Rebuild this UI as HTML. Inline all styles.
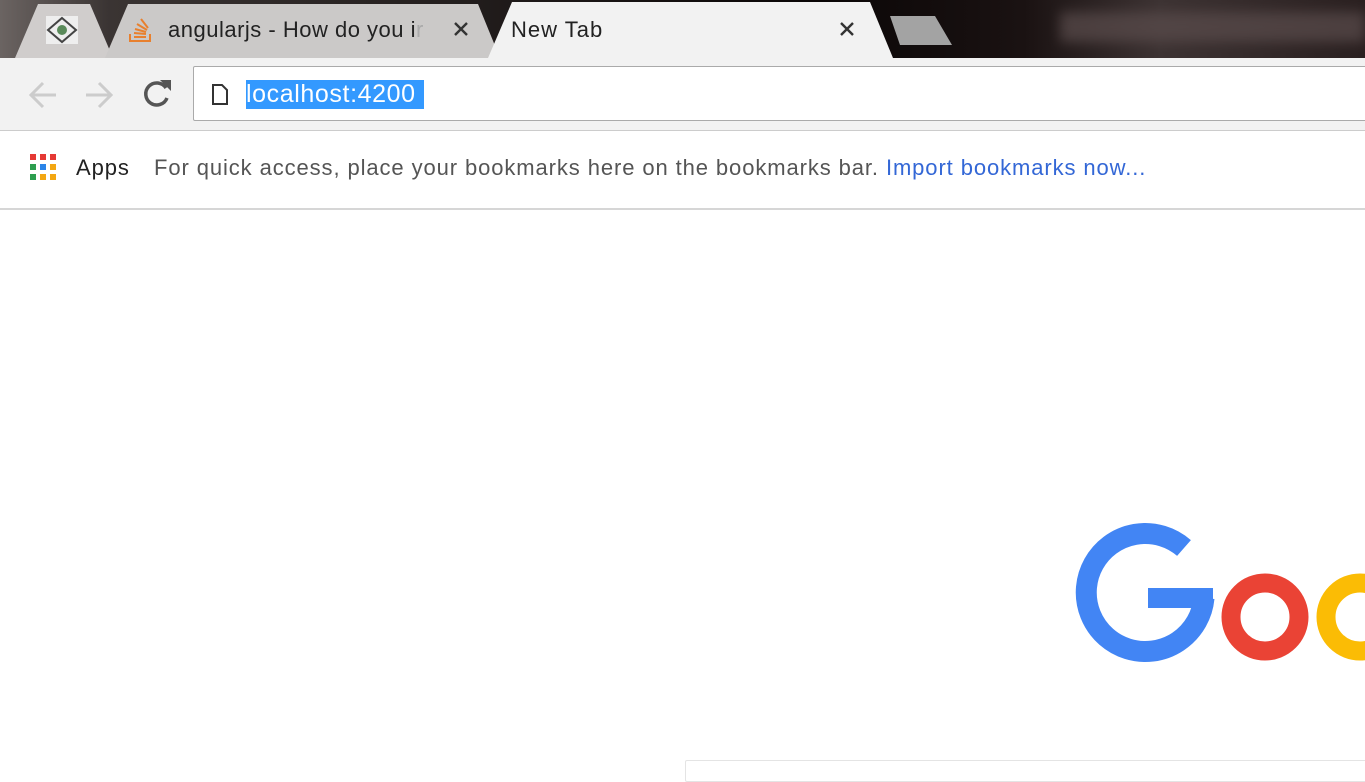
<!DOCTYPE html>
<html><head><style>
body{margin:0;width:1365px;height:768px;overflow:hidden;background:#fff;font-family:"Liberation Sans",sans-serif;position:relative}
.a{position:absolute}
</style></head><body>
<div class="a" style="left:0;top:0;width:1365px;height:58px;background:linear-gradient(90deg,#6b6462 0%,#3a3433 8%,#0a0606 60%,#1a1212 75%,#3d3333 85%,#2a2020 100%)"></div>
<div class="a" style="left:1060px;top:12px;width:305px;height:30px;background:#5a4c4c;filter:blur(6px);opacity:.7"></div>
<svg class="a" style="left:0;top:0" width="960" height="60">
<polygon points="15,58 38,4 90,4 113,58" fill="#d0cdcc"/>
<polygon points="105,58 128,4 478,4 500,58" fill="#cbc9c8"/>
<polygon points="488,58 512,2 870,2 893,58" fill="#f2f2f2"/>
<polygon points="890,16 935,16 952,45 900,45" fill="#a3a3a3"/>
<rect x="46" y="16" width="32" height="28" fill="#eee"/>
<polygon points="62,18 76,30 62,42 48,30" fill="none" stroke="#444" stroke-width="2"/>
<circle cx="62" cy="30" r="5" fill="#5a8a5a"/>
<g stroke="#e8802e" stroke-width="2" fill="none"><path d="M130 34v7h20v-7"/><path d="M134 37h12M134 33l12 1M135 29l11 3M137 24l10 6M141 19l7 9"/></g>
<g stroke="#333" stroke-width="2.4"><path d="M455 23l12 12M467 23l-12 12M841 23l12 12M853 23l-12 12"/></g>
<text x="168" y="37" font-size="22" letter-spacing="0.5" fill="#222" font-family="Liberation Sans">angularjs - How do you i<tspan fill="#aaa">r</tspan></text>
<text x="511" y="37" font-size="22" letter-spacing="1" fill="#222" font-family="Liberation Sans">New Tab</text>
</svg>
<div class="a" style="left:0;top:58px;width:1365px;height:72px;background:#f2f2f2;border-bottom:1px solid #ccc"></div>
<div class="a" style="left:193px;top:66px;width:1180px;height:53px;background:#fff;border:1px solid #aaa;border-radius:2px"></div>
<svg class="a" style="left:0;top:58px" width="240" height="72">
<g stroke="#ccc" stroke-width="3" fill="none"><path d="M56 37H31M43 25L31 37l12 12"/><path d="M86 37h25M99 25l12 12-12 12"/></g>
<path d="M166 30a11 11 0 1 0 1 10" stroke="#555" stroke-width="3.5" fill="none"/>
<polygon points="160,22 171,22 171,33" fill="#555"/>
<path d="M213 27h9l5 5v14h-14z" fill="none" stroke="#333" stroke-width="2"/>
</svg>
<div class="a" style="left:246px;top:80px;width:178px;height:29px;background:#3399ff"></div>
<div class="a" style="left:246px;top:80px;font-size:25px;letter-spacing:0.6px;line-height:29px;color:#fff;white-space:nowrap">localhost:4200</div>
<svg class="a" style="left:30px;top:154px" width="28" height="28">
<rect x="0" y="0" width="6" height="6" fill="#e53935"/><rect x="10" y="0" width="6" height="6" fill="#e53935"/><rect x="20" y="0" width="6" height="6" fill="#e53935"/>
<rect x="0" y="10" width="6" height="6" fill="#2e9e4f"/><rect x="10" y="10" width="6" height="6" fill="#2b84e8"/><rect x="20" y="10" width="6" height="6" fill="#f3a712"/>
<rect x="0" y="20" width="6" height="6" fill="#2e9e4f"/><rect x="10" y="20" width="6" height="6" fill="#f3a712"/><rect x="20" y="20" width="6" height="6" fill="#f3a712"/>
</svg>
<div class="a" style="left:76px;top:155px;font-size:22px;letter-spacing:0.9px;color:#222;line-height:26px">Apps</div>
<div class="a" style="left:154px;top:155px;font-size:22px;letter-spacing:0.9px;color:#555;line-height:26px;white-space:nowrap">For quick access, place your bookmarks here on the bookmarks bar. <span style="color:#3367d6">Import bookmarks now...</span></div>
<div class="a" style="left:0;top:208px;width:1365px;height:2px;background:#d6d6d6"></div>
<svg class="a" style="left:1060px;top:510px" width="305" height="258">
<path d="M124 38A59 59 0 1 0 144 88" fill="none" stroke="#4285f4" stroke-width="21"/>
<rect x="88" y="78" width="65" height="20" fill="#4285f4"/>
<circle cx="205" cy="107" r="34" fill="none" stroke="#ea4335" stroke-width="19"/>
<circle cx="300" cy="107" r="34" fill="none" stroke="#fbbc05" stroke-width="19"/>
</svg>
<div class="a" style="left:685px;top:760px;width:700px;height:20px;border:1px solid #e4e4e4;border-radius:2px"></div>
</body></html>
